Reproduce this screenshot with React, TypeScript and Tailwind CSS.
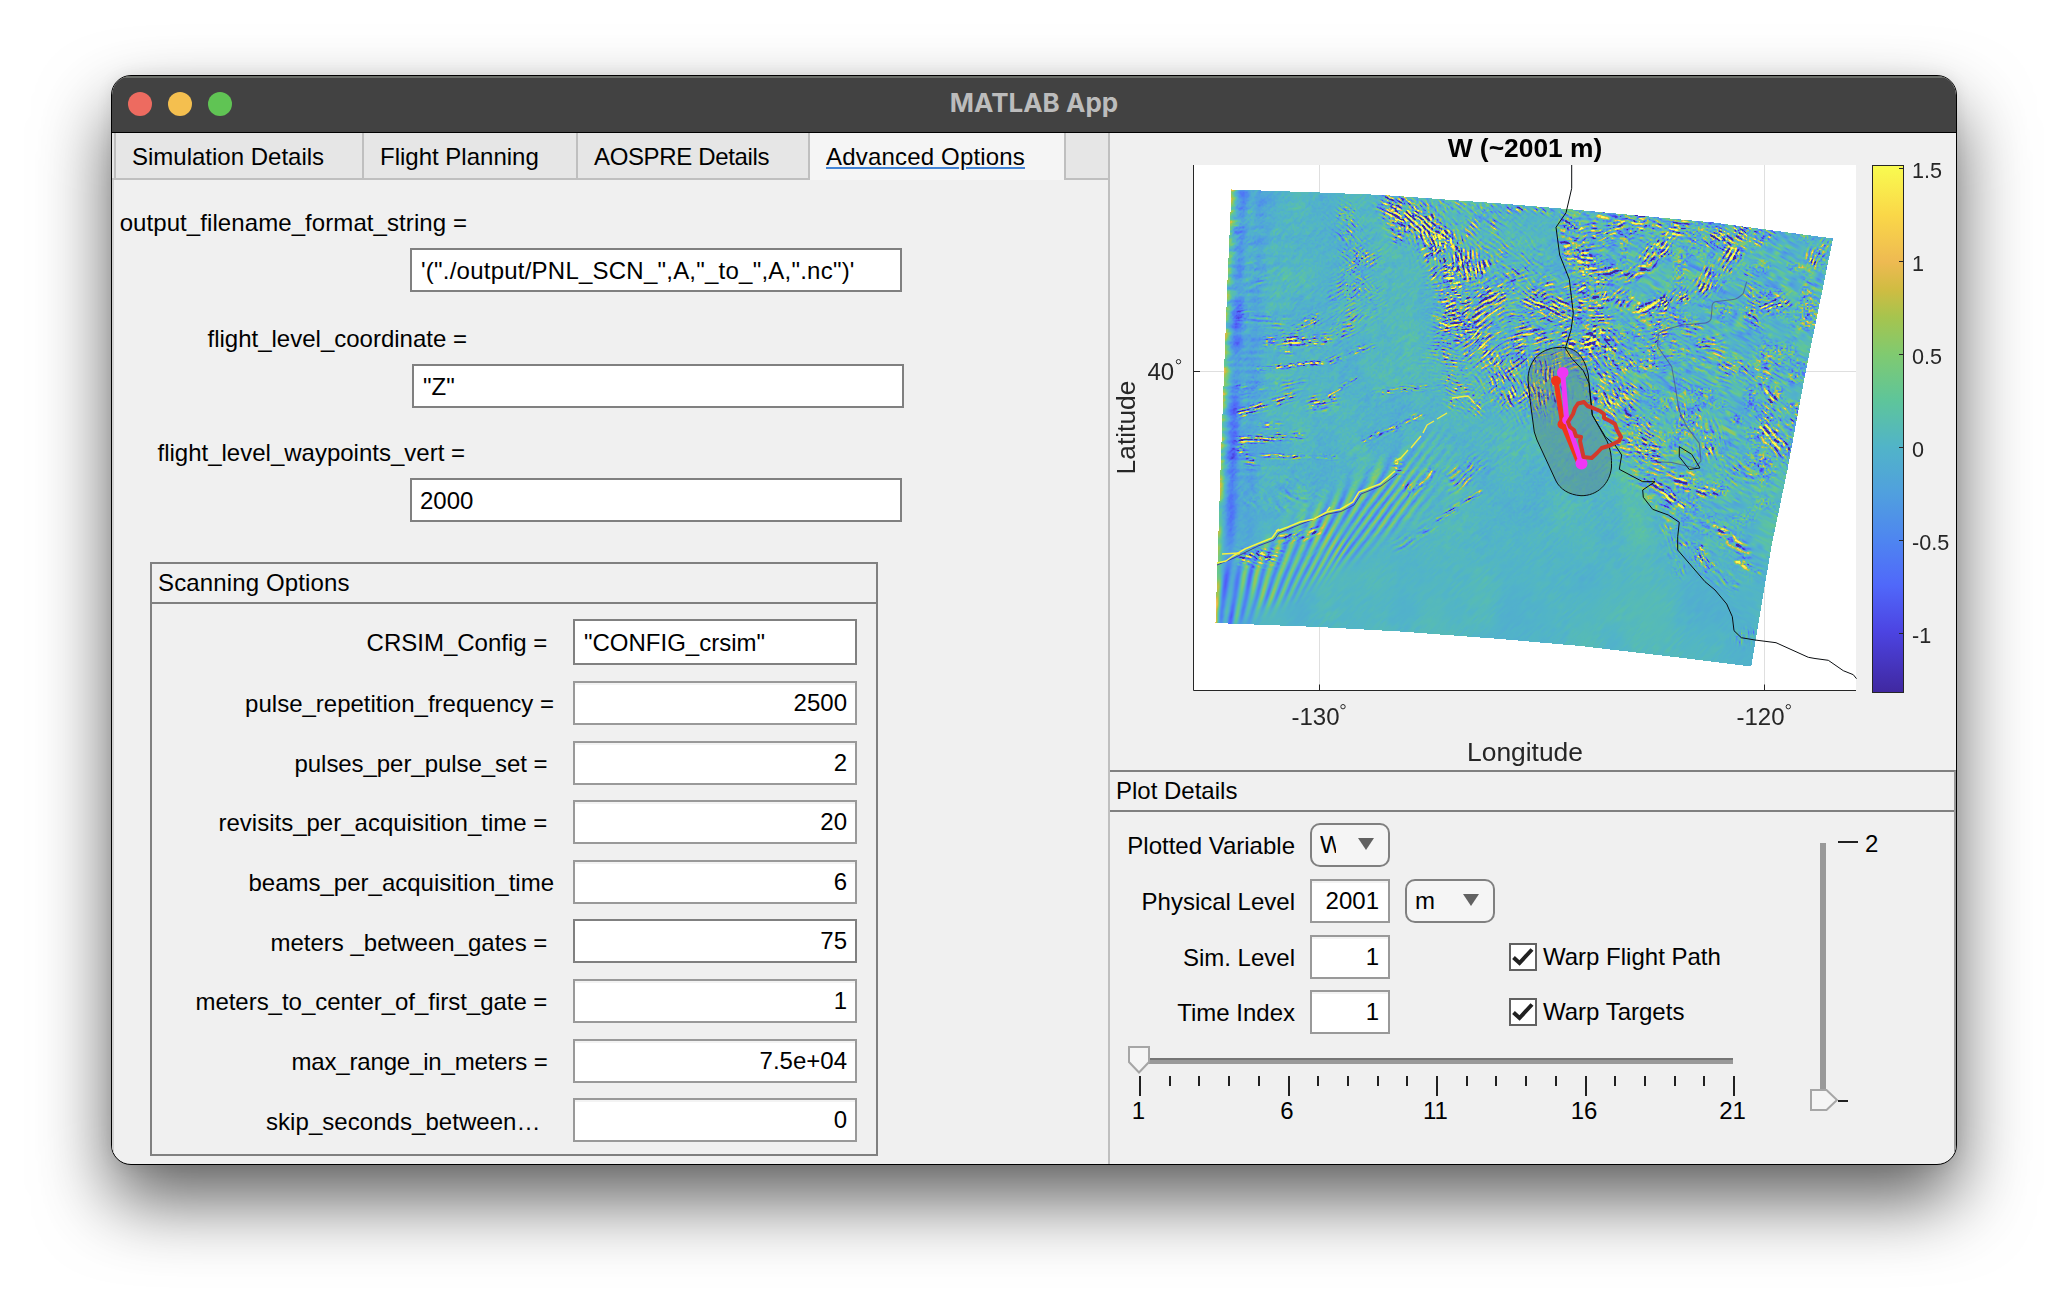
import React, { useLayoutEffect, useRef } from 'react';

/* ---------- wind field heat map ---------- */

type Pt = [number, number];

const PLOT = { x: 1194, y: 165, w: 662, h: 525 };

const COLOR_STOPS: [number, number, number, number][] = [
  [-1.33, 64, 40, 160],
  [-1.0, 76, 68, 226],
  [-0.75, 80, 104, 250],
  [-0.5, 78, 134, 240],
  [-0.25, 80, 160, 222],
  [0, 81, 180, 200],
  [0.25, 94, 197, 154],
  [0.5, 128, 202, 112],
  [0.7, 166, 196, 78],
  [0.85, 208, 188, 66],
  [1.0, 238, 186, 82],
  [1.25, 250, 215, 72],
  [1.52, 249, 251, 80],
];

function colorOf(v: number): [number, number, number] {
  const s = COLOR_STOPS;
  if (v <= s[0][0]) return [s[0][1], s[0][2], s[0][3]];
  for (let i = 1; i < s.length; i++) {
    if (v <= s[i][0]) {
      const t = (v - s[i - 1][0]) / (s[i][0] - s[i - 1][0]);
      return [
        s[i - 1][1] + t * (s[i][1] - s[i - 1][1]),
        s[i - 1][2] + t * (s[i][2] - s[i - 1][2]),
        s[i - 1][3] + t * (s[i][3] - s[i - 1][3]),
      ];
    }
  }
  const e = s[s.length - 1];
  return [e[1], e[2], e[3]];
}

function interp(pts: Pt[], t: number): number {
  if (t <= pts[0][0]) return pts[0][1];
  for (let i = 1; i < pts.length; i++) {
    if (t <= pts[i][0]) {
      const k = (t - pts[i - 1][0]) / (pts[i][0] - pts[i - 1][0]);
      return pts[i - 1][1] + k * (pts[i][1] - pts[i - 1][1]);
    }
  }
  return pts[pts.length - 1][1];
}

const clamp01 = (t: number) => Math.max(0, Math.min(1, t));

const TOP_EDGE: Pt[] = [[1231, 189], [1319, 192], [1383, 194.5], [1500, 203], [1567, 208.5], [1713, 222], [1765, 229], [1833, 238]];
const BOTTOM_EDGE: Pt[] = [[1215, 622.5], [1319, 626.5], [1400, 631], [1500, 638.5], [1580, 645.5], [1670, 656], [1751, 666]];
const LEFT_EDGE: Pt[] = [[189, 1231], [280, 1227], [372, 1223.5], [470, 1220], [622, 1215]];
const RIGHT_EDGE: Pt[] = [[238, 1832.5], [372, 1805], [469, 1787], [547, 1770.7], [666, 1750.7]];

function hash(x: number, y: number, s: number): number {
  let h = Math.imul(x, 374761393) + Math.imul(y, 668265263) + Math.imul(s, 2147483647 ^ 0x5bd1e995);
  h = Math.imul(h ^ (h >>> 13), 1274126177);
  h ^= h >>> 16;
  return (h >>> 0) / 4294967295;
}

function noise(x: number, y: number, s: number): number {
  const xi = Math.floor(x);
  const yi = Math.floor(y);
  const fx = x - xi;
  const fy = y - yi;
  const u = fx * fx * (3 - 2 * fx);
  const v = fy * fy * (3 - 2 * fy);
  const a = hash(xi, yi, s);
  const b = hash(xi + 1, yi, s);
  const c = hash(xi, yi + 1, s);
  const d = hash(xi + 1, yi + 1, s);
  return (a + (b - a) * u + (c - a) * v + (a - b - c + d) * u * v) * 2 - 1;
}

/* x1, y1, x2, y2, half width, amplitude, crest angle in degrees, wave length, crest length */
type Patch = [number, number, number, number, number, number, number, number, number];

const PATCHES: Patch[] = [
  [1386, 204, 1400, 232, 10, 3.2, 25, 3, 7],
  [1398, 208, 1440, 235, 16, 2.8, 40, 3, 8],
  [1425, 228, 1462, 262, 20, 3, 75, 3, 9],
  [1430, 245, 1440, 270, 13, 3, -40, 3, 8],
  [1455, 255, 1478, 268, 16, 2.8, 80, 3, 8],
  [1450, 285, 1458, 325, 19, 2.9, -10, 2.6, 6],
  [1472, 315, 1488, 300, 17, 2.8, -35, 2.8, 12],
  [1445, 320, 1470, 335, 14, 2.2, 20, 2.6, 6],
  [1480, 345, 1505, 355, 20, 2.8, -38, 2.8, 13],
  [1520, 330, 1560, 345, 26, 2.4, -15, 2.8, 14],
  [1535, 300, 1562, 312, 13, 2.8, 25, 2.8, 12],
  [1500, 375, 1520, 395, 22, 2, 60, 2.8, 9],
  [1540, 372, 1545, 398, 22, 2.1, 80, 2.8, 9],
  [1470, 215, 1540, 300, 34, 0.9, 40, 3, 14],
  [1400, 202, 1560, 212, 5, 1.4, 40, 3, 8],
  [1500, 290, 1560, 300, 34, 1.2, -20, 3, 12],
  [1572, 230, 1576, 255, 13, 3, 10, 4, 13],
  [1585, 235, 1640, 222, 16, 1.8, -15, 3, 9],
  [1600, 215, 1680, 228, 12, 1.9, 10, 3, 9],
  [1590, 265, 1592, 345, 19, 3, -5, 3.2, 7],
  [1570, 345, 1592, 340, 12, 3.2, 25, 5, 16],
  [1600, 340, 1612, 400, 19, 2.4, 50, 3.2, 8],
  [1608, 272, 1622, 272, 9, 3.2, -20, 4, 11],
  [1630, 275, 1650, 262, 9, 2.3, -25, 4, 11],
  [1648, 256, 1668, 242, 11, 2.5, -50, 2.8, 7],
  [1610, 295, 1625, 300, 10, 2, -50, 3, 8],
  [1640, 308, 1660, 302, 6, 3.4, -20, 3, 7],
  [1662, 303, 1702, 290, 8, 3.4, -50, 2.6, 6],
  [1706, 284, 1730, 256, 12, 2.7, -60, 2.8, 10],
  [1718, 238, 1740, 236, 13, 2.8, 30, 2.6, 5],
  [1735, 245, 1765, 232, 13, 1.3, 30, 2.8, 6],
  [1750, 280, 1756, 320, 12, 2, 30, 2.8, 6],
  [1765, 308, 1785, 300, 8, 2, -30, 2.8, 7],
  [1820, 245, 1812, 260, 9, 1.9, -60, 3, 7],
  [1655, 318, 1660, 350, 18, 1.7, -10, 2.6, 5],
  [1700, 342, 1718, 342, 7, 2.6, -5, 3, 8],
  [1680, 320, 1720, 365, 26, 0.9, 20, 3, 10],
  [1730, 365, 1770, 375, 16, 1, 30, 3, 10],
  [1762, 388, 1772, 400, 7, 2.5, 60, 4, 9],
  [1760, 425, 1786, 452, 12, 2.3, 50, 3.2, 7],
  [1770, 410, 1795, 420, 14, 1.2, 40, 3, 7],
  [1740, 470, 1780, 450, 22, 0.9, 30, 3, 8],
  [1620, 360, 1640, 440, 26, 1.4, 35, 3, 8],
  [1685, 410, 1712, 450, 18, 1.5, 70, 3, 6],
  [1622, 440, 1665, 462, 15, 2, 10, 3, 8],
  [1640, 478, 1665, 470, 10, 1.8, 20, 3.6, 12],
  [1655, 485, 1682, 506, 7, 3, 35, 4.4, 15],
  [1680, 478, 1710, 490, 9, 2.4, 15, 4, 11],
  [1665, 505, 1700, 522, 13, 1, 25, 4, 14],
  [1718, 524, 1722, 530, 5, 2.3, 10, 3.6, 9],
  [1682, 542, 1705, 552, 6, 3, 30, 4, 8],
  [1697, 555, 1708, 562, 8, 2.6, 60, 2.6, 4],
  [1725, 535, 1745, 552, 7, 2.1, 30, 4, 9],
  [1738, 562, 1758, 570, 4, 2.8, 28, 4, 15],
  [1700, 565, 1730, 585, 9, 1.2, 40, 3.4, 12],
  [1665, 530, 1680, 570, 9, 0.7, 65, 3, 9],
  [1268, 341, 1325, 338, 7, 2.2, -5, 2.4, 6],
  [1285, 334, 1315, 318, 7, 1.6, -25, 2.4, 6],
  [1280, 350, 1290, 352, 3, 3.4, 0, 2.6, 10],
  [1258, 368, 1322, 362, 3, 2.8, -5, 2.4, 6],
  [1330, 360, 1370, 345, 5, 1.4, -20, 2.4, 6],
  [1240, 413, 1290, 396, 5, 2.3, -14, 2.6, 10],
  [1315, 403, 1330, 401, 8, 2.2, -10, 2.6, 6],
  [1330, 395, 1355, 378, 3, 2, -30, 2.4, 6],
  [1240, 439, 1300, 436, 5, 2.6, 0, 2.4, 6],
  [1260, 425, 1278, 424, 4, 2.6, 0, 2.4, 8],
  [1242, 450, 1250, 462, 7, 2.4, 10, 2.8, 8],
  [1262, 455, 1335, 457, 3, 2, 0, 2.4, 6],
  [1240, 388, 1300, 384, 8, 0.8, -10, 3, 18],
  [1230, 310, 1280, 322, 10, 0.7, 0, 3, 26],
  [1235, 220, 1260, 280, 16, 0.5, -15, 5, 20],
  [1345, 215, 1360, 290, 14, 1.3, 40, 2.6, 5],
  [1340, 300, 1365, 260, 16, 1.1, -30, 2.4, 5],
  [1340, 330, 1372, 300, 14, 1.1, -30, 2.4, 6],
  [1375, 392, 1430, 386, 4, 1.5, 0, 2.4, 6],
  [1365, 440, 1420, 415, 4, 1.8, -30, 2.4, 6],
  [1440, 350, 1460, 390, 18, 1.3, 10, 2.4, 5],
  [1455, 400, 1476, 408, 9, 1.8, 40, 2.6, 6],
  [1480, 390, 1520, 400, 18, 1, -40, 2.8, 12],
  [1280, 538, 1312, 530, 7, 2, -24, 3, 12],
  [1245, 556, 1275, 556, 9, 2, 15, 2.8, 7],
  [1397, 463, 1398, 470, 5, 2.2, 0, 2.6, 6],
  [1410, 488, 1428, 474, 8, 2, -48, 3.2, 24],
  [1455, 480, 1475, 465, 12, 1.5, -40, 3, 14],
  [1438, 519, 1478, 492, 4, 1.9, -30, 3, 12],
  [1400, 545, 1430, 525, 8, 0.8, -35, 3, 20],
  [1290, 490, 1310, 495, 16, 0.5, 30, 4, 14],
  [1255, 500, 1280, 505, 14, 0.4, 50, 6, 16],
  [1740, 637, 1752, 635, 8, 0.8, 90, 2.6, 12],
];

const CREST = PATCHES.map((p) => {
  const a = (p[6] * Math.PI) / 180;
  return [Math.cos(a), Math.sin(a)];
});

function segmentDistance(px: number, py: number, x1: number, y1: number, x2: number, y2: number) {
  const dx = x2 - x1;
  const dy = y2 - y1;
  const l = dx * dx + dy * dy || 1;
  const t = clamp01(((px - x1) * dx + (py - y1) * dy) / l);
  return Math.hypot(px - x1 - t * dx, py - y1 - t * dy);
}

const COAST_X: Pt[] = [[165, 1572], [227, 1556], [313, 1573], [348, 1565], [415, 1592], [455, 1621], [490, 1643], [550, 1678], [604, 1727], [640, 1750], [700, 1760]];

/* gravity waves fanning out behind the front */
function fanWave(x: number, y: number): number {
  const off = y - (600 - (x - 1225) * 0.64);
  let m = 0.15 + 0.6 * clamp01((x - 1225) / 150);
  let a = x + (m * off) / (1 - 0.64 * m);
  m = 0.15 + 0.6 * clamp01((a - 1225) / 150);
  a = x + (m * off) / (1 - 0.64 * m);
  const s = Math.max(-40, a - 1225);
  const phase = Math.log(1 + (s * 0.03) / 13) / 0.03;
  const half = 26 + 12 * clamp01((x - 1215) / 80);
  const env = Math.exp(-((off / half) ** 4)) * clamp01((1460 - x) / 80);
  return 0.68 * env * Math.sin(2 * Math.PI * phase + 0.6 * noise(x / 30, y / 30, 10)) * (0.85 + 0.4 * noise(x / 24, y / 24, 11));
}

function fieldAt(x: number, y: number): number {
  const left = interp(LEFT_EDGE, y);
  const e = x - left;
  let v = 0.02 + 0.08 * noise(x / 26, y / 34, 1);

  const inland = x > interp(COAST_X, y) ? 1 : 0;
  const south = clamp01((y - 470) / 120);
  const fine = inland ? 0.4 * (1 - 0.8 * south) : 0.11 * (1 - 0.6 * south);
  const a = inland ? 0.5 : -0.75;
  const u = x * Math.cos(a) + y * Math.sin(a);
  const w = -x * Math.sin(a) + y * Math.cos(a);
  v += fine * noise(u / 7, w / 1.9, 2) * (1 + 0.7 * noise(x / 18, y / 18, 3));
  if (inland) v += 1.1 * (1 - south) * noise(x / 1.7, y / 1.5, 5) * Math.max(0, noise(x / 14, y / 14, 6) + 0.15);
  else v += 0.1 * (1 - south) * noise(x / 1.6, y / 1.6, 5);

  v -= 0.62 * Math.exp(-(((e - 12) / 6) ** 2)) * (0.85 + 0.5 * noise(1, y / 24, 7));
  v += 0.5 * Math.exp(-((e / 4) ** 2)) * (0.9 + 0.8 * noise(3, y / 9, 8));
  v -= 0.2 * Math.exp(-(((e - 30) / 8) ** 2));
  if (e < 70 && y < 480) v += 0.34 * noise(e / 30, y / 3.2, 9) * Math.exp(-e / 40);

  if (x < 1480 && y > 420) v += fanWave(x, y);

  for (let i = 0; i < PATCHES.length; i++) {
    const p = PATCHES[i];
    const reach = p[4] * 1.8;
    if (x < Math.min(p[0], p[2]) - reach || x > Math.max(p[0], p[2]) + reach) continue;
    if (y < Math.min(p[1], p[3]) - reach || y > Math.max(p[1], p[3]) + reach) continue;
    const d = segmentDistance(x, y, p[0], p[1], p[2], p[3]) / p[4];
    const env = Math.exp(-d * d * 1.3);
    const c = CREST[i];
    const along = x * c[0] + y * c[1];
    const across = -x * c[1] + y * c[0];
    const carrier = Math.sin((2 * Math.PI * across) / (p[7] * 1.6) + 3.2 * noise(x / 13, y / 13, 300 + i));
    const broken = 0.45 + 1.0 * noise(along / (p[8] * 0.45), across / (p[7] * 0.9), 20 + i);
    const speckle = noise(x / 1.7, y / 1.5, 400 + i);
    const gate = Math.max(0.2, 0.8 + 0.7 * noise(x / 9, y / 9, 130 + i));
    v += p[5] * env * gate * (0.8 * carrier * broken + 0.35 * speckle);
  }

  const orange = segmentDistance(x, y, 1645, 495, 1670, 525);
  v += 0.75 * Math.exp(-((orange / 3.5) ** 2)) * (0.6 + 0.6 * noise(x / 4, y / 4, 14));
  const green = segmentDistance(x, y, 1625, 475, 1640, 530);
  v += 0.14 * Math.exp(-((green / 14) ** 2));
  return v;
}

function HeatMap() {
  const ref = useRef<HTMLCanvasElement>(null);
  useLayoutEffect(() => {
    const ctx = ref.current?.getContext('2d');
    if (!ctx) return;
    const img = ctx.createImageData(PLOT.w, PLOT.h);
    for (let j = 0; j < PLOT.h; j++) {
      const y = j + PLOT.y;
      for (let i = 0; i < PLOT.w; i++) {
        const x = i + PLOT.x;
        const o = (j * PLOT.w + i) * 4;
        let c: [number, number, number] = [255, 255, 255];
        const inside =
          x >= interp(LEFT_EDGE, y) && x <= interp(RIGHT_EDGE, y) && y >= interp(TOP_EDGE, x) && y <= interp(BOTTOM_EDGE, x);
        if (inside) c = colorOf(fieldAt(x, y));
        else if (x === 1319 || x === 1764 || y === 371) c = [223, 223, 223];
        img.data[o] = c[0];
        img.data[o + 1] = c[1];
        img.data[o + 2] = c[2];
        img.data[o + 3] = 255;
      }
    }
    ctx.putImageData(img, 0, 0);
  }, []);
  return <canvas ref={ref} width={PLOT.w} height={PLOT.h} className="absolute left-[84px] top-8" />;
}

const BAR_TICKS: [number, string][] = [
  [168, '1.5'],
  [261, '1'],
  [354, '0.5'],
  [447, '0'],
  [540, '-0.5'],
  [633, '-1'],
];

function MapPlot() {
  return (
    <div className="relative h-[637px] w-full overflow-hidden">
      <HeatMap />
      <svg viewBox="1110 133 846 637" width="846" height="637" className="absolute inset-0" fontFamily="'Liberation Sans', Arial, sans-serif" fill="none">
        <defs>
          <linearGradient id="bar" x1="0" y1="1" x2="0" y2="0">
            {COLOR_STOPS.map(([v, r, g, b]) => (
              <stop key={v} offset={(v + 1.33) / 2.85} stopColor={`rgb(${r},${g},${b})`} />
            ))}
          </linearGradient>
        </defs>

        <text x="1525" y="157" textAnchor="middle" fontSize="26.4" fontWeight="700" fill="#000">W (~2001 m)</text>

        <g strokeLinejoin="round">
          <path d="M1217 565L1234 558L1258 546L1274 540L1279 533L1301 524L1328 514L1341 511.500L1354 505L1361 494L1381 486L1397 474" stroke="#3f3aa0" strokeWidth="1" />
          <path d="M1217 563L1226 561L1233 556L1245 549L1257 544L1272 538L1277 531L1288 527L1300 522L1314 519L1327 512L1340 509.500L1353 502L1359 492L1380 484L1395 471" stroke="#f7f63f" strokeWidth="1.500" />
          <path d="M1222 554L1240 553M1327 511L1330 507M1276 531L1279 529M1395 461L1401 458L1408 450M1411 448L1415 443L1421 436M1423 433L1427 425L1434 421M1437 419L1447 413M1452 398L1460 397L1468 396L1474 402" stroke="#f3ee42" strokeWidth="1.400" />
        </g>

        <path d="M1746.700 281.700L1743.300 293.300Q1738 299 1733 299.500L1715 301.700Q1711.500 303 1712 309L1711 319Q1709 323 1703 323.300L1681.700 325L1668 329L1658.300 333.300L1657.700 346.700L1671.700 366.700L1675 385L1679 410L1686.700 426.700L1699.300 443.300L1701 461L1695 468L1672 462.500L1656.700 461.700" stroke="#4b5190" strokeOpacity="0.75" strokeWidth="1.100" />
        <path d="M1679.300 446.700L1691.700 454.300L1700 468L1689.300 469.500L1679.300 456.700Z" stroke="#10181c" strokeWidth="1" />

        <path d="M1560 347.300C1573 347 1584 353 1588.300 375L1592.300 415L1607 441C1611 450 1611.700 458 1611.500 467C1610 484 1597 496 1581 495.700C1569 495 1560 489 1556 481L1537 440L1534.300 432L1530 400L1528 380C1528 363 1538 348 1560 347.300Z" fill="#666f62" fillOpacity="0.28" stroke="#0c1012" strokeWidth="1" />
        <path d="M1571.700 165V188.300L1568.300 203L1566 212.700L1556 227.300L1559.700 255L1569.300 279.300L1573.300 313.300L1571 330L1565.300 348.300L1571.700 358.300L1583.300 370.700L1589 383.300L1592.300 415L1605.300 436.700L1615 445L1621.700 455L1619.300 469.300L1642.700 481.700H1655L1642.700 490L1643.300 497.300L1652.700 509.300L1668.300 515L1679.300 522.300L1677.700 536.700V550L1705 581.700L1715 590L1726.700 604L1732.300 616.700L1734 630.700L1741.300 637.700L1755 640L1776 642.700L1808.300 657.300L1815 658.500L1828.300 660.300L1843.300 670.700L1853.300 674.700L1856.500 678.700" stroke="#0a0d10" strokeWidth="1" />

        <path d="M1556 380.700L1562.700 424.300L1578 461" stroke="#f0351b" strokeWidth="5" strokeLinejoin="round" />
        <circle cx="1556" cy="380.700" r="5" fill="#f0351b" />
        <circle cx="1562.500" cy="424.300" r="5" fill="#f0351b" />
        <path d="M1562.700 372.700L1566.700 420L1581.500 463.300" stroke="#ef36f5" strokeWidth="5" strokeLinejoin="round" />
        <circle cx="1562.700" cy="372.700" r="5.800" fill="#ef36f5" />
        <circle cx="1566.700" cy="420" r="4.500" fill="#ef36f5" />
        <circle cx="1581.500" cy="463.500" r="6" fill="#ef36f5" />
        <path d="M1568 422L1573 414L1575 408L1578 403.500L1584 402L1587.500 406L1593 408L1600 411L1604 414L1604 418L1610 421L1615 424L1617 430L1621 437L1619 441L1610 445.500L1601.700 448L1597 453L1591.700 458L1583.500 457L1582 450L1580 441L1581 437L1576 436L1574 430L1570 427Z" stroke="#d23a2b" strokeWidth="4" strokeLinejoin="round" />

        <path d="M1193.500 165V690.500H1856" stroke="#262626" strokeWidth="1" />
        <path d="M1319.500 690V684.500M1764.500 690V684.500M1194 371.500H1200" stroke="#262626" strokeWidth="1" />

        <g fontSize="24" fill="#262626">
          <text x="1147.500" y="379.500">40</text>
          <text x="1291.500" y="725">-130</text>
          <text x="1736.500" y="725">-120</text>
        </g>
        <g stroke="#262626" strokeWidth="1">
          <circle cx="1178.500" cy="361.700" r="2.200" />
          <circle cx="1343" cy="706.700" r="2.200" />
          <circle cx="1788.300" cy="706.700" r="2.200" />
        </g>
        <g fontSize="26.4" fill="#262626" textAnchor="middle">
          <text x="1525" y="760.500">Longitude</text>
          <text transform="translate(1134.500 427.500) rotate(-90)">Latitude</text>
        </g>

        <rect x="1872.500" y="165.500" width="31" height="527" fill="url(#bar)" stroke="#262626" strokeWidth="1" />
        {BAR_TICKS.map(([y, label]) => (
          <g key={label}>
            <path d={`M1899 ${y + 0.5}H1903`} stroke="#262626" />
            <text x="1912" y={y + 9.500} fontSize="21.6" fill="#262626">{label}</text>
          </g>
        ))}
      </svg>
    </div>
  );
}

/* ---------- left pane ---------- */

function Tab({ label, className, active }: { label: string; className: string; active?: boolean }) {
  return (
    <div className={`${className} h-[47px] shrink-0 border-l-2 border-[#bfbfbf] pl-4 pt-[10px] ${active ? 'bg-[#f5f5f5] border-r-2' : 'bg-[#e6e6e6] border-b-2'}`}>
      <span className={active ? 'underline decoration-[#4384d6] decoration-2 underline-offset-[2px]' : ''}>{label}</span>
    </div>
  );
}

function PathField({ label, value, labelClass, fieldClass }: { label: string; value: string; labelClass: string; fieldClass: string }) {
  return (
    <>
      <div className={`${labelClass} h-7 text-right`}>{label}</div>
      <div className={`${fieldClass} mt-[11px] h-11 w-[492px] border-2 border-[#808080] bg-white pt-[7px]`}>{value}</div>
    </>
  );
}

const SCAN_ROWS = [
  { label: 'pulse_repetition_frequency =', value: '2500', gap: 'mt-4', pad: 'pt-[9px]' },
  { label: 'pulses_per_pulse_set = ', value: '2', gap: 'mt-4', pad: 'pt-[9px] tracking-[-0.06px]' },
  { label: 'revisits_per_acquisition_time = ', value: '20', gap: 'mt-[15px]', pad: 'pt-[9px]' },
  { label: 'beams_per_acquisition_time', value: '6', gap: 'mt-4', pad: 'pt-[9px]' },
  { label: 'meters _between_gates = ', value: '75', gap: 'mt-[15px]', pad: 'pt-[10px]', dark: true },
  { label: 'meters_to_center_of_first_gate = ', value: '1', gap: 'mt-4', pad: 'pt-[9px] tracking-[-0.03px]' },
  { label: 'max_range_in_meters = ', value: '7.5e+04', gap: 'mt-4', pad: 'pt-[9px] tracking-[-0.16px]' },
  { label: 'skip_seconds_between…  ', value: '0', gap: 'mt-[15px]', pad: 'pt-[10px] tracking-[0.05px]' },
];

function NumberBox({ value, className, dark }: { value: string; className: string; dark?: boolean }) {
  return (
    <div
      className={`${className} h-11 shrink-0 border-2 bg-white pt-[6px] text-right ${
        dark ? 'border-[#808080]' : 'border-[#999999] shadow-[inset_0_2px_0_#f3f3f3]'
      }`}
    >
      {value}
    </div>
  );
}

function ScanningOptions() {
  return (
    <div className="ml-[38px] mt-10 h-[594px] w-[728px] border-2 border-[#808080]">
      <div className="h-10 border-b-2 border-[#808080] pl-[6px] pt-[5px] tracking-[0.14px]">Scanning Options</div>
      <div className="mt-[15px] flex">
        <div className="w-[402px] whitespace-pre pt-[10px] text-right">{'CRSIM_Config = '}</div>
        <div className="ml-[19px] h-[46px] w-[284px] border-2 border-[#808080] bg-white pl-[9px] pt-2">"CONFIG_crsim"</div>
      </div>
      {SCAN_ROWS.map((r) => (
        <div key={r.label} className={`flex h-11 ${r.gap}`}>
          <div className={`w-[402px] whitespace-pre text-right ${r.pad}`}>{r.label}</div>
          <NumberBox value={r.value} dark={r.dark} className="ml-[19px] w-[284px] pr-[8px]" />
        </div>
      ))}
    </div>
  );
}

function LeftPane() {
  return (
    <div className="h-full w-[998px] shrink-0 border-r-2 border-[#bfbfbf] shadow-[inset_2px_0_0_#d2d2d2]">
      <div className="flex h-[47px] bg-[#e6e6e6]">
        <div className="w-[2px] border-b-2 border-[#bfbfbf]" />
        <Tab label="Simulation Details" className="w-[248px]" />
        <Tab label="Flight Planning" className="w-[214px]" />
        <Tab label="AOSPRE Details" className="w-[232px] tracking-[-0.36px]" />
        <Tab label="Advanced Options" className="w-[258px] tracking-[0.18px]" active />
        <div className="flex-1 border-b-2 border-[#bfbfbf]" />
      </div>
      <PathField label="output_filename_format_string =" value={`'("./output/PNL_SCN_",A,"_to_",A,".nc")'`} labelClass="mt-[29px] w-[355px] tracking-[0.08px]" fieldClass="ml-[298px] pl-[9px] tracking-[0.23px]" />
      <PathField label="flight_level_coordinate =" value={`"Z"`} labelClass="mt-[33px] w-[355px]" fieldClass="ml-[300px] pl-[9px]" />
      <PathField label="flight_level_waypoints_vert =" value="2000" labelClass="mt-[31px] w-[353px]" fieldClass="ml-[298px] pl-[8px]" />
      <ScanningOptions />
    </div>
  );
}

/* ---------- plot details ---------- */

function DropDown({ value, className, textClass }: { value: string; className: string; textClass: string }) {
  return (
    <div className={`${className} flex h-11 shrink-0 justify-between rounded-[10px] border-2 border-[#808080] bg-[#f5f5f5] pl-2 pr-[14px]`}>
      <span className={`${textClass} h-[27px] overflow-hidden pt-[6px] box-content`}>{value}</span>
      <svg width="16" height="12" viewBox="0 0 16 12" className="mt-[13px] shrink-0">
        <path d="M0 0H16L8 12Z" fill="#616161" />
      </svg>
    </div>
  );
}

function Check({ label }: { label: string }) {
  return (
    <div className="ml-[119px] flex pt-2">
      <div className="h-7 w-7 border-2 border-[#616161] bg-white">
        <svg width="24" height="24" viewBox="0 0 24 24">
          <path d="M2.500 12.500L8.500 18L21 4.500" fill="none" stroke="#212121" strokeWidth="4" />
        </svg>
      </div>
      <span className="ml-[6px] whitespace-nowrap">{label}</span>
    </div>
  );
}

function RowLabel({ children }: { children: React.ReactNode }) {
  return <div className="w-[185px] shrink-0 pt-[9px] text-right">{children}</div>;
}

function TimeSlider() {
  const ticks = Array.from({ length: 21 }, (_, i) => i);
  return (
    <svg width="640" height="84" viewBox="1120 1044 640 84" className="ml-[10px] mt-[10px]" fontFamily="'Liberation Sans', Arial, sans-serif" fontSize="24">
      <rect x="1139" y="1058" width="594" height="6" fill="#999999" />
      <rect x="1139" y="1058" width="594" height="2" fill="#757575" />
      <path d="M1129 1047H1149V1062L1139 1072.500L1129 1062Z" fill="#f5f5f5" stroke="#a6a6a6" strokeWidth="2" />
      {ticks.map((i) => (
        <rect key={i} x={Math.round(1139 + i * 29.700)} y="1076" width="2" height={i % 5 === 0 ? 20 : 10} fill="#212121" />
      ))}
      {[1, 6, 11, 16, 21].map((n) => (
        <text key={n} x={1138.500 + (n - 1) * 29.700} y="1118.500" textAnchor="middle" fill="#000">{n}</text>
      ))}
    </svg>
  );
}

function PlotDetails() {
  return (
    <div className="h-[394px] w-full border-r-2 border-t-2 border-r-[#999999] border-t-[#808080]">
      <div className="h-10 border-b-2 border-[#808080] pl-[6px] pt-[5px]">Plot Details</div>
      <div className="flex">
        <div className="w-[690px] shrink-0">
          <div className="mt-[11px] flex h-11">
            <RowLabel>Plotted Variable</RowLabel>
            <DropDown value="W" className="ml-[15px] w-20" textClass="w-4" />
          </div>
          <div className="mt-3 flex h-11">
            <RowLabel>Physical Level</RowLabel>
            <NumberBox value="2001" className="ml-[15px] w-20 pr-[9px]" />
            <DropDown value="m" className="ml-[15px] w-[90px]" textClass="w-7" />
          </div>
          <div className="mt-3 flex h-11">
            <RowLabel>Sim. Level</RowLabel>
            <NumberBox value="1" className="ml-[15px] w-20 pr-[9px]" />
            <Check label="Warp Flight Path" />
          </div>
          <div className="mt-[11px] flex h-11">
            <RowLabel>Time Index</RowLabel>
            <NumberBox value="1" className="ml-[15px] w-20 pr-[9px]" />
            <Check label="Warp Targets" />
          </div>
          <TimeSlider />
        </div>
        <svg width="90" height="290" viewBox="1800 828 90 290" className="mt-4" fontFamily="'Liberation Sans', Arial, sans-serif" fontSize="24">
          <rect x="1820" y="843" width="6" height="248" fill="#999999" />
          <path d="M1811 1090H1826.500L1837 1100L1826.500 1110H1811Z" fill="#f5f5f5" stroke="#a6a6a6" strokeWidth="2" />
          <rect x="1838" y="841" width="20" height="2" fill="#212121" />
          <rect x="1838" y="1100" width="10" height="2" fill="#212121" />
          <text x="1865" y="851.500" fill="#000">2</text>
        </svg>
      </div>
    </div>
  );
}

/* ---------- window ---------- */

export default function App() {
  return (
    <div className="h-[1312px] w-[2068px] overflow-hidden bg-white pl-[111px] pt-[75px] font-['Liberation_Sans',Arial,sans-serif] text-[24px] leading-[27px] text-black">
      <div className="h-[1090px] w-[1846px] overflow-hidden rounded-[20px] border border-black bg-[#f0f0f0] shadow-[0_36px_72px_rgba(0,0,0,0.62),0_0_16px_rgba(0,0,0,0.08)]">
        <div className="flex h-[57px] items-center border-b border-black bg-[#424242] shadow-[inset_0_2px_0_#6c6f6a]">
          <div className="ml-4 flex w-[104px] gap-4">
            <div className="h-6 w-6 shrink-0 rounded-full bg-[#ed6b60]" />
            <div className="h-6 w-6 shrink-0 rounded-full bg-[#f4bf4f]" />
            <div className="h-6 w-6 shrink-0 rounded-full bg-[#60c454]" />
          </div>
          <div className="mr-[120px] flex-1 pb-1 text-center font-[Inter,sans-serif] text-[26px] font-bold text-[#bcbcbc]">MATLAB App</div>
        </div>
        <div className="flex h-[1031px]">
          <LeftPane />
          <div className="flex h-full w-[846px] flex-col">
            <MapPlot />
            <PlotDetails />
          </div>
        </div>
      </div>
    </div>
  );
}
